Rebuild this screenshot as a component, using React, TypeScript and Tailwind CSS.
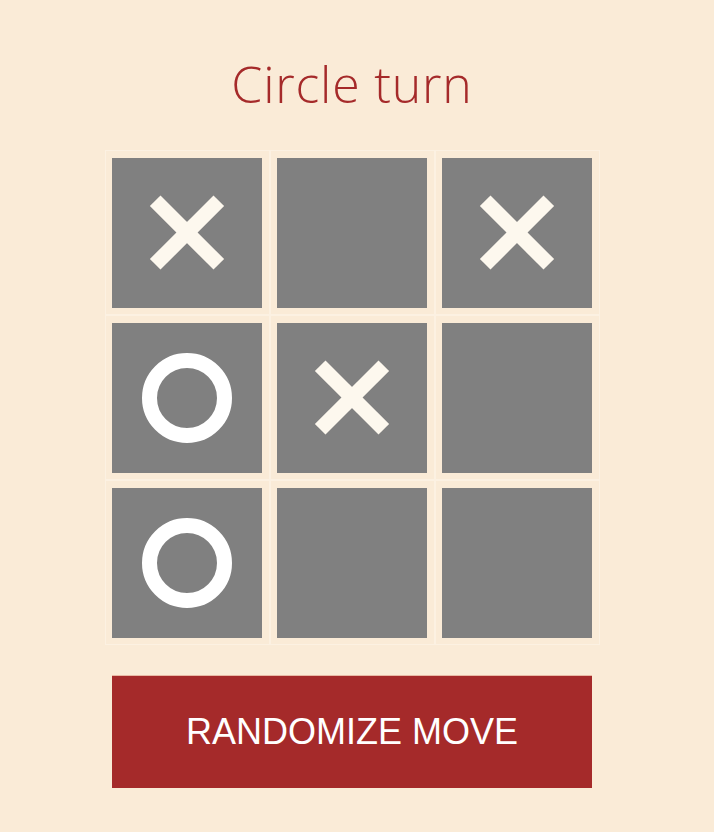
import { useState } from 'react';

type Mark = 'x' | 'o' | null;

function Cross() {
  return (
    <div className="relative w-[90px] h-[90px]">
      <div className="absolute left-0 top-[37.5px] w-[90px] h-[15px] bg-[#fdf8ee] rotate-45" />
      <div className="absolute left-0 top-[37.5px] w-[90px] h-[15px] bg-[#fdf8ee] -rotate-45" />
    </div>
  );
}

function Circle() {
  return <div className="w-[90px] h-[90px] rounded-full border-[15px] border-white" />;
}

export default function App() {
  const [board] = useState<Mark[]>(['x', null, 'x', 'o', 'x', null, 'o', null, null]);

  return (
    <div className="min-h-[832px] bg-[#faebd7] font-['Liberation_Sans',Arial,sans-serif]">
      <div className="w-[704px] flex flex-col items-center pt-[52px]">
        <h1 className="font-['Open_Sans',sans-serif] font-light text-[50px] leading-[64px] text-[#a52a2a] tracking-[0.8px]">
          Circle turn
        </h1>
        <div className="grid grid-cols-[repeat(3,165px)] mt-[34px]">
          {board.map((mark, i) => (
            <div key={i} className="w-[165px] h-[165px] border border-[#fcf1e2] flex items-center justify-center">
              <div className="w-[150px] h-[150px] bg-[#808080] flex items-center justify-center">
                {mark === 'x' && <Cross />}
                {mark === 'o' && <Circle />}
              </div>
            </div>
          ))}
        </div>
        <button className="mt-[30px] w-[480px] h-[113px] bg-[#a52a2a] border-t border-[#e9b9a5] text-white text-[36px] uppercase">
          Randomize move
        </button>
      </div>
    </div>
  );
}
